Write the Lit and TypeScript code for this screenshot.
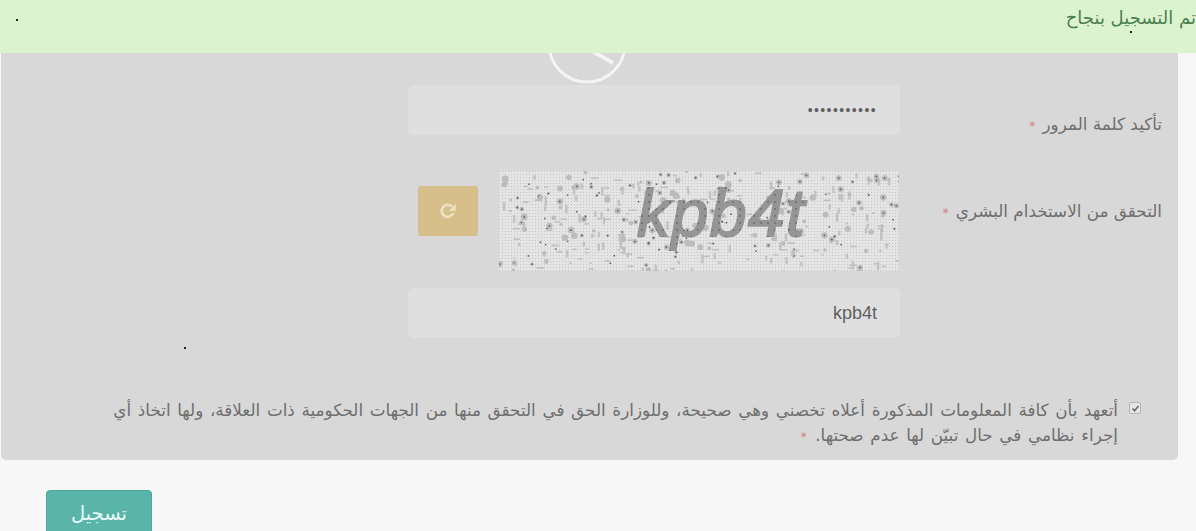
import { LitElement, html, svg, css } from 'lit';
import { customElement } from 'lit/decorators.js';

// small seeded generator so the captcha noise is the same on every run
function noise(seed: number) {
  let s = seed;
  return () => {
    s = (s * 16807) % 2147483647;
    return (s - 1) / 2147483646;
  };
}

function captchaNoise() {
  const r = noise(4711);
  const out = [];
  for (let i = 0; i < 400; i++) {
    const x = r() * 400;
    const y = r() * 100;
    const kind = r();
    if (kind < 0.38) {
      out.push(svg`<circle cx=${x} cy=${y} r=${1.2 + r() * 2.2} fill="#bcbcbc"></circle>`);
      if (r() < 0.5) {
        out.push(svg`<circle cx=${x} cy=${y} r="0.9" fill="#626262"></circle>`);
      }
    } else if (kind < 0.66) {
      out.push(svg`<rect x=${x} y=${y} width=${2 + r() * 6} height="1.6" fill="#c0c0c0"></rect>`);
    } else if (kind < 0.88) {
      out.push(svg`<rect x=${x} y=${y} width="2.4" height=${3 + r() * 6} fill="#c2c2c2"></rect>`);
    } else {
      out.push(svg`<circle cx=${x} cy=${y} r="0.9" fill="#686868"></circle>`);
    }
  }
  return out;
}

@customElement('app-root')
export class AppRoot extends LitElement {
  static styles = css`
    :host {
      display: block;
      position: relative;
      height: 531px;
      overflow: hidden;
      background: #f7f7f7;
      font-family: 'DejaVu Sans', 'Noto Sans', sans-serif;
      color: #6f6f6f;
    }
    .alert {
      position: absolute;
      top: 0;
      left: 0;
      right: 0;
      height: 53px;
      box-sizing: border-box;
      padding: 6px 0 0 0;
      background: #dbf3cf;
      color: #4b7f50;
      font-size: 18px;
      line-height: 24px;
      direction: rtl;
      z-index: 3;
    }
    .speck {
      position: absolute;
      width: 2px;
      height: 2px;
      background: #222;
      z-index: 4;
    }
    .spinner {
      position: absolute;
      left: 546px;
      top: 3px;
      width: 82px;
      height: 82px;
      z-index: 2;
    }
    .panel {
      box-sizing: border-box;
      width: 1177px;
      height: 460px;
      margin-left: 1px;
      padding: 85px 16px 0 0;
      background: #d8d8d8;
      border-radius: 0 0 5px 5px;
      direction: rtl;
    }
    .row {
      display: grid;
      grid-template-columns: 262px 492px;
      height: 50px;
    }
    .label {
      font-size: 16.8px;
      line-height: 24px;
    }
    .label.pw {
      padding-top: 27px;
    }
    .label.human {
      padding-top: 28px;
    }
    .star {
      color: #d47f84;
      font-size: 12px;
      margin-right: 2px;
    }
    .input {
      box-sizing: border-box;
      height: 50px;
      padding: 0 23px;
      background: #dfdfdf;
      border-radius: 5px;
      display: flex;
      align-items: center;
      color: #5f5f5f;
      font-family: 'Liberation Sans', sans-serif;
      font-size: 18px;
    }
    .dots {
      font-size: 14px;
      letter-spacing: 1.4px;
    }
    .captcha-row {
      height: 100px;
      margin-top: 36px;
    }
    .captcha {
      display: flex;
      align-items: flex-start;
      gap: 21px;
      padding-right: 1px;
    }
    .captcha svg {
      display: block;
    }
    .refresh {
      width: 60px;
      height: 50px;
      margin-top: 15px;
      border-radius: 3px;
      background: #d6bf8a;
      display: flex;
      align-items: center;
      justify-content: center;
    }
    .answer-row {
      margin-top: 17px;
    }
    .agree {
      display: flex;
      gap: 11px;
      margin-top: 60px;
      padding: 0 21px 0 0;
      width: 1032px;
      font-size: 16.8px;
      word-spacing: 1.32px;
      line-height: 25px;
    }
    .check {
      flex: none;
      box-sizing: border-box;
      width: 12px;
      height: 12px;
      margin-top: 4px;
      background: #e6e6e6;
      border: 1px solid #b5b5b5;
      border-radius: 2px;
      display: flex;
      align-items: center;
      justify-content: center;
    }
    .submit {
      box-sizing: border-box;
      width: 106px;
      height: 50px;
      margin: 30px 0 0 46px;
      padding: 0 0 4px;
      background: #5ab4a8;
      border: 1px solid #4fa599;
      border-radius: 4px;
      color: #e9fbf7;
      font-family: inherit;
      font-size: 19.5px;
      direction: rtl;
    }
  `;

  render() {
    return html`
      <div class="alert">تم التسجيل بنجاح</div>
      <span class="speck" style="left:16px;top:19px"></span>
      <span class="speck" style="left:1130px;top:31px"></span>
      <span class="speck" style="left:184px;top:347px"></span>
      <svg class="spinner" viewBox="0 0 82 82" fill="none" stroke="#f4f4f4">
        <circle cx="41" cy="41" r="38" stroke-width="3"></circle>
        <path d="M48 49l19 11" stroke-width="4"></path>
      </svg>

      <div class="panel">
        <div class="row">
          <div class="label pw">تأكيد كلمة المرور <span class="star">*</span></div>
          <div class="input"><span class="dots">•••••••••••</span></div>
        </div>

        <div class="row captcha-row">
          <div class="label human">التحقق من الاستخدام البشري <span class="star">*</span></div>
          <div class="captcha">
            <svg width="400" height="100" viewBox="0 0 400 100">
              <defs>
                <pattern id="grain" width="3" height="3" patternUnits="userSpaceOnUse">
                  <rect width="3" height="3" fill="#e4e4e4"></rect>
                  <rect width="1" height="1" fill="#c6c6c6"></rect>
                </pattern>
                <pattern id="ink" width="7" height="7" patternUnits="userSpaceOnUse">
                  <rect width="7" height="7" fill="#959595"></rect>
                  <circle cx="3" cy="3" r="1" fill="#6e6e6e"></circle>
                </pattern>
              </defs>
              <rect width="400" height="100" fill="url(#grain)"></rect>
              ${captchaNoise()}
              <text
                x="138"
                y="65"
                fill="url(#ink)"
                stroke="url(#ink)"
                stroke-width="2"
                direction="ltr"
                text-anchor="start"
                font-family="Liberation Sans"
                font-size="66"
                font-style="italic"
                letter-spacing="1.5"
              >kpb4t</text>
            </svg>
            <div class="refresh">
              <svg width="18" height="18" viewBox="0 0 18 18" fill="none">
                <path d="M14.2 11.2A6 6 0 1 1 13 4.6" stroke="#eee0c2" stroke-width="2.8"></path>
                <path d="M16.8 1.8v7.2H9.6z" fill="#eee0c2"></path>
              </svg>
            </div>
          </div>
        </div>

        <div class="row answer-row">
          <div></div>
          <div class="input">kpb4t</div>
        </div>

        <div class="agree">
          <span class="check">
            <svg width="9" height="9" viewBox="0 0 9 9" fill="none">
              <path d="M1.5 4.5l2 2.2 4-4.6" stroke="#666" stroke-width="1.6"></path>
            </svg>
          </span>
          <div>
            أتعهد بأن كافة المعلومات المذكورة أعلاه تخصني وهي صحيحة، وللوزارة الحق في التحقق منها من
            الجهات الحكومية ذات العلاقة، ولها اتخاذ أي إجراء نظامي في حال تبيّن لها عدم صحتها.
            <span class="star">*</span>
          </div>
        </div>
      </div>

      <button class="submit">تسجيل</button>
    `;
  }
}
